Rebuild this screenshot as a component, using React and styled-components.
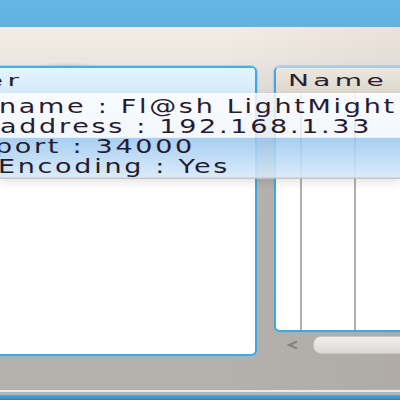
import React from "react"
import styled, { createGlobalStyle } from "styled-components"

const GlobalStyle = createGlobalStyle`
  html, body {
    margin: 0;
    padding: 0;
    background: #b6b2ae;
  }
`

const FONT = `"DejaVu Sans", "Noto Sans", sans-serif`

const Frame = styled.div`
  position: relative;
  width: 400px;
  height: 400px;
  overflow: hidden;
  display: flex;
  flex-direction: column;
  font-family: ${FONT};
  background: #b6b2ae;
`

const TitleBar = styled.div`
  height: 27px;
  flex-shrink: 0;
  background: linear-gradient(to bottom, #66b6e6, #60b2e3);
`

const Workspace = styled.div`
  flex: 1;
  padding-top: 39px;
  background:
    radial-gradient(ellipse 30px 4px at 68px 39px, rgba(170, 165, 165, 0.35), transparent),
    radial-gradient(ellipse 25px 5px at 165px 53px, rgba(175, 175, 180, 0.3), transparent),
    radial-gradient(ellipse 20px 6px at 130px 62px, rgba(175, 175, 180, 0.3), transparent),
    linear-gradient(to right, rgba(255, 255, 255, 0) 55%, rgba(120, 110, 105, 0.08)),
    linear-gradient(to bottom, #f4ece5 0, #eee7e1 30px, #e2ddd9 60px, #c2beba 110px, #b5b1ad 160px, #b4b0ac 100%);
`

const PanelsRow = styled.div`
  display: flex;
  align-items: flex-start;
  gap: 17px;
  margin-left: -6px;
`

const Panel = styled.div`
  box-sizing: border-box;
  width: ${p => p.$width}px;
  height: ${p => p.$height}px;
  flex-shrink: 0;
  display: flex;
  flex-direction: column;
  background: #fff;
  border: 2px solid #3fa8e0;
  border-top-color: ${p => p.$topColor};
  border-radius: 6px;
  box-shadow: 0 0 0 1px rgba(120, 190, 235, 0.45);
  overflow: hidden;
`

const PanelHeader = styled.div`
  height: 25px;
  flex-shrink: 0;
  display: flex;
  align-items: center;
  overflow: hidden;
  background: ${p =>
    p.$tone === "blue"
      ? "linear-gradient(to bottom, #e6f4fd, #d3eaf9)"
      : "linear-gradient(to bottom, #ece7df, #ddd6cc)"};
`

const HeaderLabel = styled.span`
  display: inline-block;
  margin-left: ${p => p.$offset}px;
  font-size: 16px;
  letter-spacing: 2.5px;
  color: #2b1e33;
  white-space: nowrap;
  transform: scaleX(1.75);
  transform-origin: left center;
`

const ColumnGrid = styled.div`
  flex: 1;
  display: grid;
  grid-template-columns: 26px 54px 1fr;
`

const Column = styled.div`
  border-right: ${p => (p.$line ? "2px solid #b5afab" : "none")};
`

const FilesColumn = styled.div`
  display: flex;
  flex-direction: column;
`

const ScrollRow = styled.div`
  height: 26px;
  display: flex;
  align-items: center;
  gap: 14px;
  padding-left: 13px;
`

const ScrollArrow = styled.svg`
  width: 12px;
  height: 10px;
  flex-shrink: 0;
`

const ScrollHandle = styled.div`
  width: 110px;
  height: 16px;
  border-radius: 8px;
  border: 1px solid #c9c5c1;
  background: linear-gradient(to bottom, #f1efed, #dcd8d4);
`

const Footer = styled.div`
  height: 11px;
  flex-shrink: 0;
  background: linear-gradient(
    to bottom,
    #b4b0ac 0,
    #b4b0ac 1px,
    #ebe8e5 1px,
    #ebe8e5 3px,
    #b6b2ae 3px,
    #b6b2ae 6px,
    #5aa6d8 6px,
    #4092c8 9px,
    #2f7fb4 11px
  );
`

const PeerTooltip = styled.div`
  position: absolute;
  top: 93px;
  left: 0;
  right: 0;
  height: 86px;
  box-sizing: border-box;
  padding-top: 2px;
  border-top: 1px solid rgba(255, 255, 255, 0.9);
  background: linear-gradient(
    to bottom,
    rgba(248, 251, 254, 0.84) 0,
    rgba(240, 246, 252, 0.84) 51%,
    rgba(152, 199, 239, 0.86) 52%,
    rgba(214, 233, 249, 0.9) 97%,
    rgba(185, 185, 185, 0.9) 100%
  );
  box-shadow: 0 4px 8px rgba(0, 0, 0, 0.1);
`

const TipLine = styled.div`
  height: 20px;
  line-height: 20px;
  font-size: 20px;
  letter-spacing: 2px;
  color: #271a30;
  white-space: nowrap;
  margin-left: ${p => p.$offset}px;
  transform: scaleX(1.35);
  transform-origin: left center;
`

const tipLines = [
  { text: "name : Fl@sh LightMight", offset: -1 },
  { text: "address : 192.168.1.33", offset: 0 },
  { text: "port : 34000", offset: -5 },
  { text: "Encoding : Yes", offset: -2 },
]

export default function App() {
  return (
    <Frame>
      <GlobalStyle />
      <TitleBar />
      <Workspace>
        <PanelsRow>
          <Panel $width={263} $height={290} $topColor="#45ade3">
            <PanelHeader $tone="blue">
              <HeaderLabel $offset={-52}>Peer</HeaderLabel>
            </PanelHeader>
          </Panel>
          <FilesColumn>
            <Panel $width={140} $height={266} $topColor="#a9cde6">
              <PanelHeader $tone="beige">
                <HeaderLabel $offset={12}>Name</HeaderLabel>
              </PanelHeader>
              <ColumnGrid>
                <Column $line />
                <Column $line />
                <Column />
              </ColumnGrid>
            </Panel>
            <ScrollRow>
              <ScrollArrow viewBox="0 0 12 10">
                <polyline points="10,1.5 2,5 10,8.5" fill="none" stroke="#85817e" strokeWidth="2" />
              </ScrollArrow>
              <ScrollHandle />
            </ScrollRow>
          </FilesColumn>
        </PanelsRow>
      </Workspace>
      <Footer />
      <PeerTooltip>
        {tipLines.map(line => (
          <TipLine key={line.text} $offset={line.offset}>
            {line.text}
          </TipLine>
        ))}
      </PeerTooltip>
    </Frame>
  )
}
